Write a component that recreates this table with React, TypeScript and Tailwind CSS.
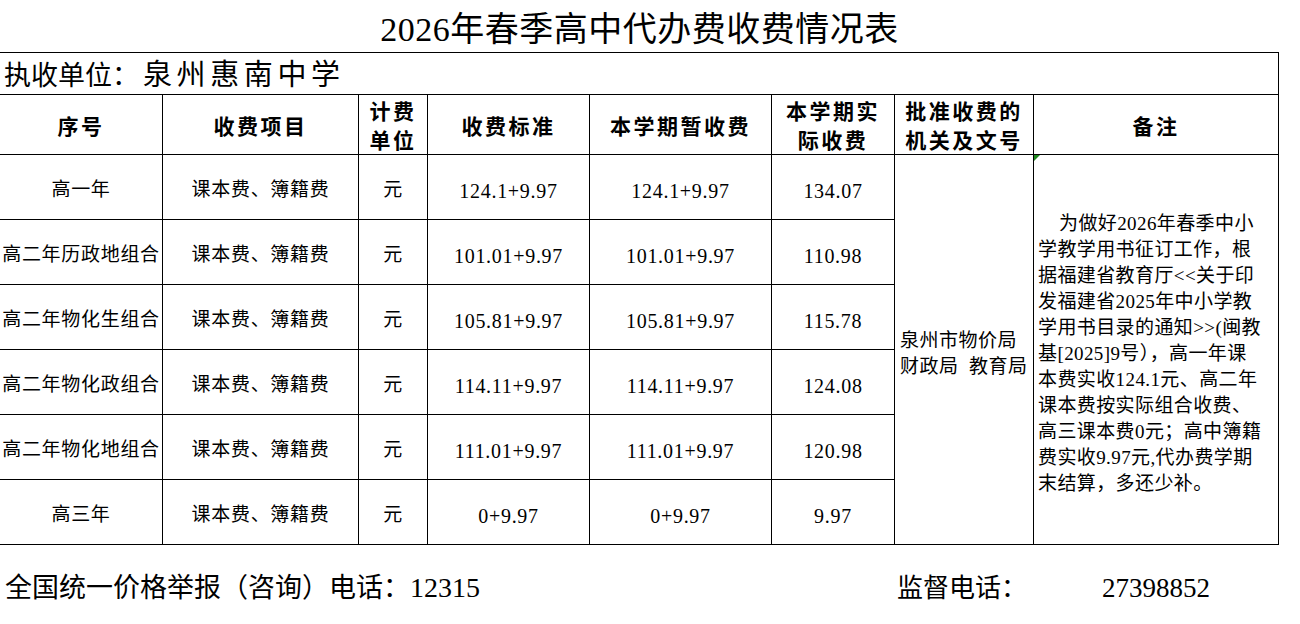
const rows = [
  { name: "高一年", std: "124.1+9.97", temp: "124.1+9.97", real: "134.07" },
  { name: "高二年历政地组合", std: "101.01+9.97", temp: "101.01+9.97", real: "110.98" },
  { name: "高二年物化生组合", std: "105.81+9.97", temp: "105.81+9.97", real: "115.78" },
  { name: "高二年物化政组合", std: "114.11+9.97", temp: "114.11+9.97", real: "124.08" },
  { name: "高二年物化地组合", std: "111.01+9.97", temp: "111.01+9.97", real: "120.98" },
  { name: "高三年", std: "0+9.97", temp: "0+9.97", real: "9.97" },
];

const noteLines = [
  "为做好2026年春季中小",
  "学教学用书征订工作，根",
  "据福建省教育厅<<关于印",
  "发福建省2025年中小学教",
  "学用书目录的通知>>(闽教",
  "基[2025]9号），高一年课",
  "本费实收124.1元、高二年",
  "课本费按实际组合收费、",
  "高三课本费0元；高中簿籍",
  "费实收9.97元,代办费学期",
  "末结算，多还少补。",
];

const cell = "flex items-center justify-center border-r border-b border-black";
const head = `${cell} pt-[5px] text-center text-[21px] font-bold tracking-[2.5px] leading-[29px]`;
const body = `${cell} pt-[7px] text-[19px] tracking-[0.7px] whitespace-nowrap`;

export default function App() {
  return (
    <div className="w-[1300px] h-[624px] bg-white text-black [font-family:'Liberation_Serif','Noto_Sans_CJK_SC',serif]">
      <div className="w-[1279px] h-[52px] flex items-center justify-center pt-[6px] text-[34px] tracking-[0.5px]">
        2026年春季高中代办费收费情况表
      </div>

      <div className="grid w-[1279px] border-t border-black grid-cols-[163px_196px_69px_162px_182px_123px_139px_245px] grid-rows-[42px_60px_65px_65px_65px_65px_65px_65px]">
        <div className="col-span-8 flex items-center pl-[4px] pt-[5px] border-r border-b border-black">
          <span className="text-[27px]">执收单位：</span>
          <span className="text-[29px] tracking-[4.6px] ml-[4px]">泉州惠南中学</span>
        </div>

        <div className={head}>序号</div>
        <div className={head}>收费项目</div>
        <div className={`${head} tracking-[1px]`}>
          计费
          <br />
          单位
        </div>
        <div className={head}>收费标准</div>
        <div className={head}>本学期暂收费</div>
        <div className={`${head} tracking-[1px]`}>
          本学期实
          <br />
          际收费
        </div>
        <div className={`${head} tracking-[1px]`}>
          批准收费的
          <br />
          机关及文号
        </div>
        <div className={head}>备注</div>

        {rows.map((r, i) => (
          <div key={r.name} className="contents">
            <div className={`${body} tracking-[0.2px]`}>{r.name}</div>
            <div className={body}>课本费、簿籍费</div>
            <div className={body}>元</div>
            <div className={`${body} text-[20px] tracking-[0.5px]`}>{r.std}</div>
            <div className={`${body} text-[20px] tracking-[0.5px]`}>{r.temp}</div>
            <div className={`${body} text-[20px] tracking-[0.5px]`}>{r.real}</div>
            {i === 0 && (
              <>
                <div className="row-span-6 flex flex-col justify-center pl-[5px] pt-[8px] border-r border-b border-black text-[19px] tracking-[0.5px] leading-[26px] whitespace-pre">
                  <div>泉州市物价局</div>
                  <div>财政局  教育局</div>
                </div>
                <div className="relative row-span-6 flex flex-col justify-center pl-[4px] pt-[8px] border-r border-b border-black text-[19px] tracking-[0.4px] leading-[26px] whitespace-nowrap">
                  <div className="absolute left-0 top-0 w-0 h-0 border-t-[6px] border-t-[#1f8a1f] border-r-[6px] border-r-transparent" />
                  {noteLines.map((l, j) => (
                    <div key={j} className={j === 0 ? "pl-[21px]" : ""}>
                      {l}
                    </div>
                  ))}
                </div>
              </>
            )}
          </div>
        ))}
      </div>

      <div className="flex items-center h-[78px] pt-[8px] pl-[5px] text-[26px] whitespace-nowrap">
        <div className="w-[892px] text-[27px]">
          全国统一价格举报（咨询）电话：<span className="text-[28px]">12315</span>
        </div>
        <div className="w-[205px]">监督电话：</div>
        <div className="text-[27px]">27398852</div>
      </div>
    </div>
  );
}
